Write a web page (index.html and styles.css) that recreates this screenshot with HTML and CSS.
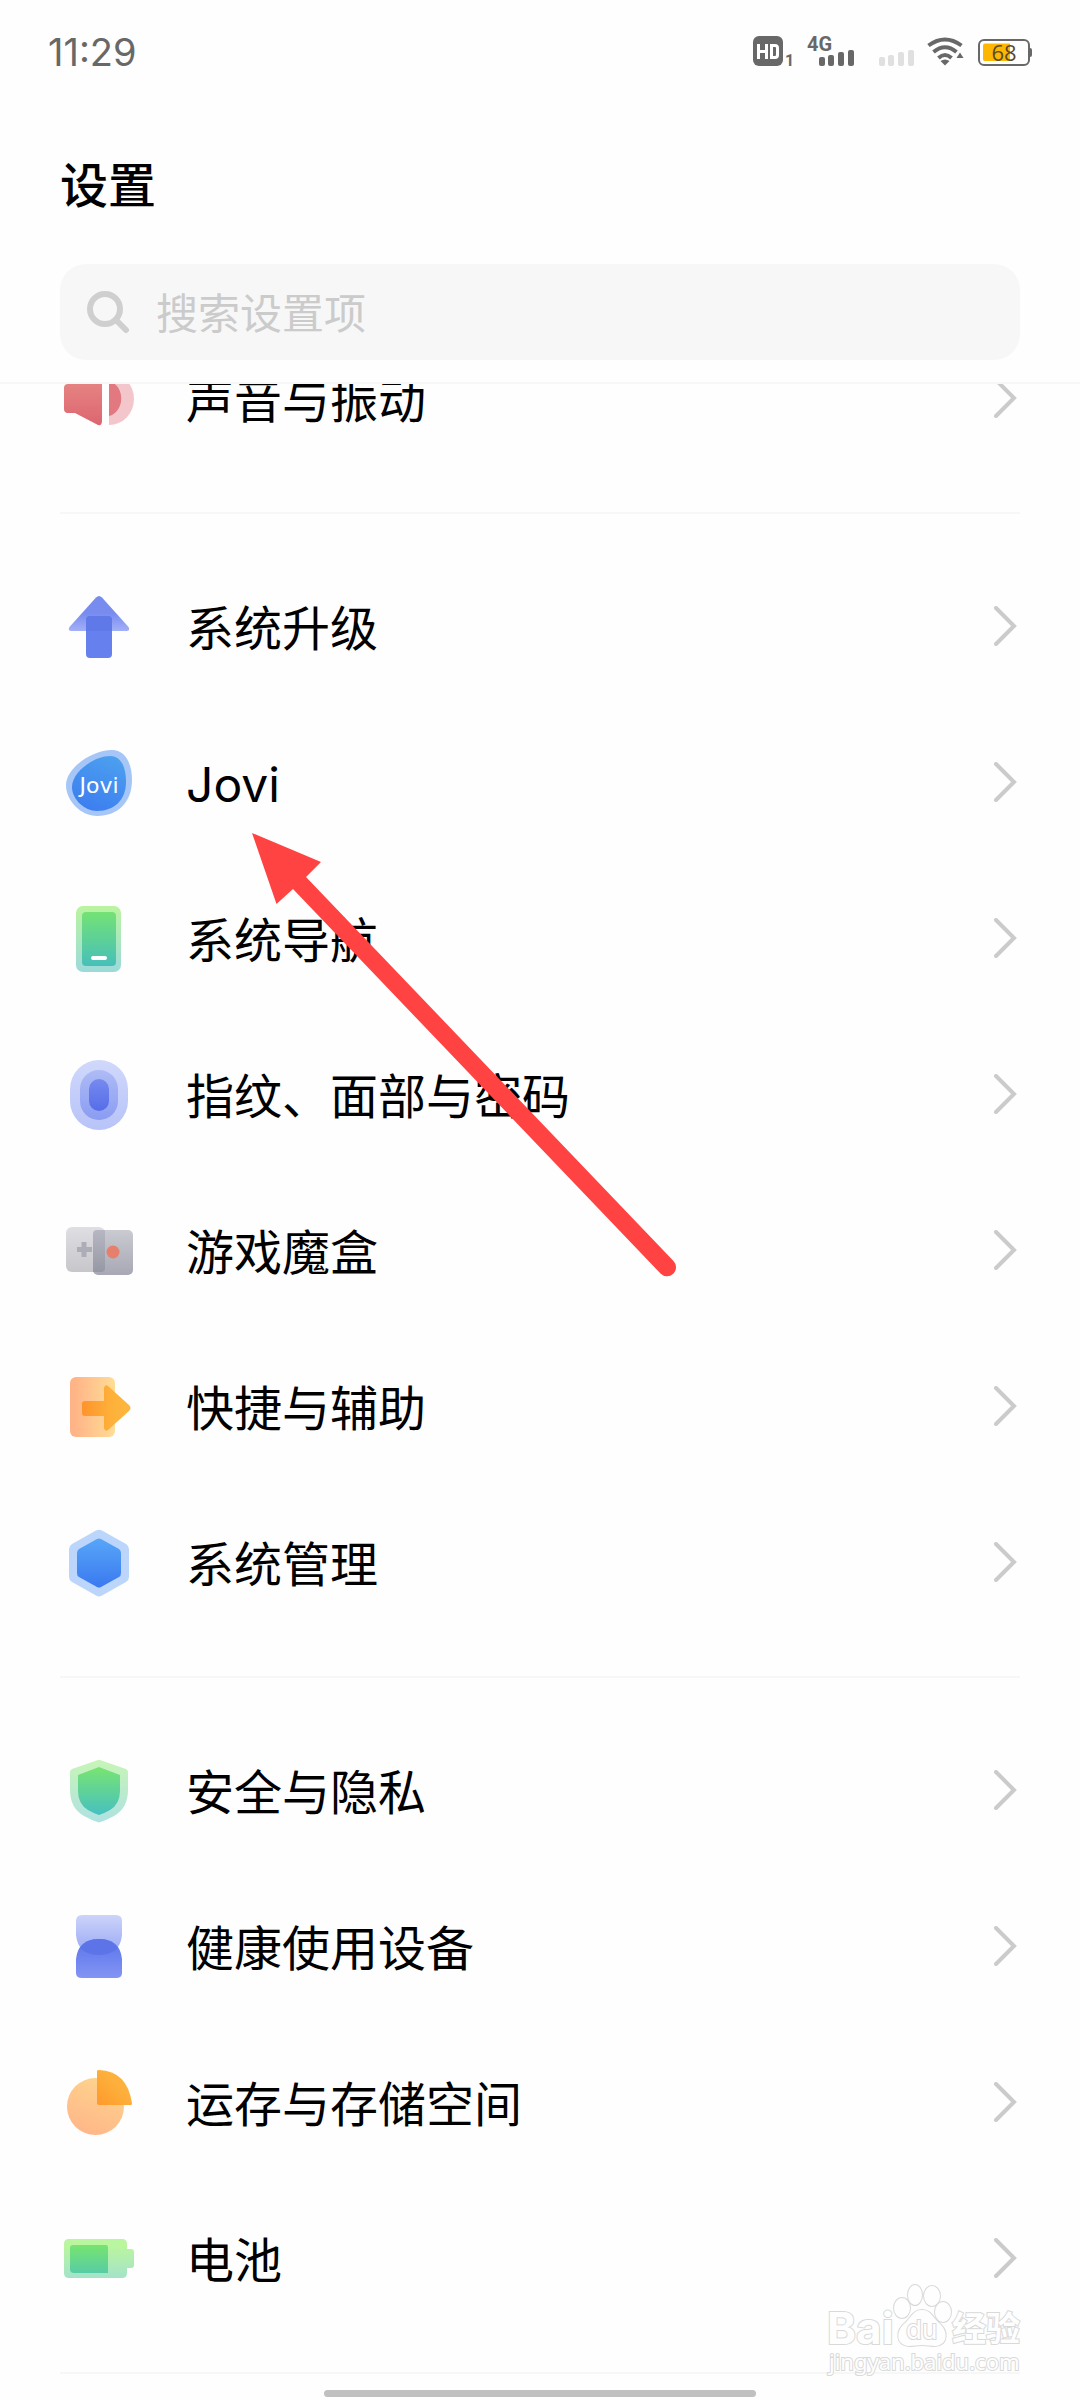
FILE: index.html
```html
<!DOCTYPE html>
<html lang="zh-CN">
<head>
<meta charset="utf-8">
<meta name="viewport" content="width=device-width, initial-scale=1">
<title>设置</title>
<link rel="stylesheet" href="styles.css">
</head>
<body>
<div class="screen">
  <header class="header">
    <div class="status">
      <time class="clock">11:29</time>
      <div class="status-icons">
        <svg class="status-svg" width="280" height="40" viewBox="752 32 280 40" role="img" aria-label="HD 4G 68%">
          <rect x="753" y="36" width="30" height="30" rx="6" fill="#686868"/>
          <path d="M758.5 44v15M766.500 44v15M758.5 51.500h8" stroke="#fff" stroke-width="3" fill="none"/>
          <path d="M771.500 45.500h3.500q2.500 0 2.500 2.500v7q0 2.500-2.500 2.500h-3.500z" stroke="#fff" stroke-width="3" fill="none"/>
          <text class="sim" x="785" y="66">1</text>
          <text class="net" x="807" y="51">4G</text>
          <g fill="#686868">
            <rect x="819" y="57" width="6" height="9" rx="2"/><rect x="828" y="55" width="6" height="11" rx="2"/><rect x="838" y="52" width="6" height="14" rx="2"/><rect x="848" y="50" width="6" height="16" rx="2"/>
          </g>
          <g fill="#e0e0e0">
            <rect x="879" y="57" width="6" height="9" rx="2"/><rect x="888" y="55" width="6" height="11" rx="2"/><rect x="898" y="52" width="6" height="14" rx="2"/><rect x="908" y="50" width="6" height="16" rx="2"/>
          </g>
          <g fill="none" stroke="#686868" stroke-width="4">
            <path d="M928.500 45.500Q945 33.500 961.500 45.500"/>
            <path d="M933.500 52Q945 42.500 956.500 52"/>
            <path d="M938.500 58Q945 52 951.500 58"/>
          </g>
          <path d="M945 65.500l-4.500-4.500q4.500-3 9 0z" fill="#686868"/>
          <path d="M956.500 58l3.500-5.500 3.500 5.500z" fill="#686868"/>
          <rect x="979" y="40" width="50" height="25" rx="5" fill="#fff" stroke="#686868" stroke-width="2"/>
          <path d="M985 43.500h25v17.500h-25q-2 0-2-2v-13.500q0-2 2-2z" fill="#fdb602"/>
          <path d="M1030 48q2 0 2 2v5q0 2-2 2z" fill="#686868"/>
          <text class="charge" x="1004" y="61" text-anchor="middle">68</text>
        </svg>
      </div>
    </div>
    <h1 class="title">设置</h1>
    <label class="search">
      <svg width="44" height="44" viewBox="0 0 44 44" aria-hidden="true"><circle cx="19" cy="19" r="15" fill="none" stroke="#cfcfcf" stroke-width="6"/><path d="M31 31l9 9" stroke="#cfcfcf" stroke-width="6" stroke-linecap="round"/></svg>
      <input class="search-input" type="search" placeholder="搜索设置项" aria-label="搜索设置项">
    </label>
  </header>

  <main class="list">
    <ul class="group group-scrolled">
      <li><a class="row" href="#sound">
        <svg class="icon" viewBox="0 0 78 78" aria-hidden="true">
          <defs><linearGradient id="red" x2="0" y2="1"><stop stop-color="#e88a86"/><stop offset="1" stop-color="#dc6670"/></linearGradient></defs>
          <path d="M8 25h7l23-11q4-1 4 3v45q0 5-4 4L15 54H8q-4 0-4-4V29q0-4 4-4z" fill="url(#red)"/>
          <path d="M49 14a25 26 0 0 1 0 52z" fill="#f2c6ca"/><path d="M49 22a16 18 0 0 1 0 35z" fill="#e27880"/>
        </svg><span class="label">声音与振动</span>
        <svg class="chevron" viewBox="0 0 26 40" aria-hidden="true"><path d="M2 2l18 18L2 38"/></svg></a></li>
    </ul>
    <ul class="group">
      <li><a class="row" href="#update">
        <svg class="icon" viewBox="0 0 78 78" aria-hidden="true">
          <defs><linearGradient id="up" x2="0" y2="1"><stop offset=".5" stop-color="#788cf0"/><stop offset="1" stop-color="#a3b0f7"/></linearGradient></defs>
          <path d="M36 10.500q3-3 6 0l26.500 29.500q2 4-2 4h-55q-4 0-2-4z" fill="url(#up)"/>
          <rect x="26" y="29" width="26" height="42" rx="4" fill="#6680ee"/>
          <path d="M30 29h18q4 0 4 4v11H26V33q0-4 4-4z" fill="#6079e8"/>
        </svg><span class="label">系统升级</span>
        <svg class="chevron" viewBox="0 0 26 40" aria-hidden="true"><path d="M2 2l18 18L2 38"/></svg></a></li>
      <li><a class="row" href="#jovi">
        <svg class="icon" viewBox="0 0 78 78" aria-hidden="true">
          <defs><linearGradient id="jo" x1=".7" y1="0" x2=".3" y2="1"><stop stop-color="#4c9fef"/><stop offset="1" stop-color="#3c7df0"/></linearGradient></defs>
          <path d="M52 7C65 7 72 20 72 37C72 59 58 73 37 73C21 73 6 58 6 42C6 25 32 7 52 7z" fill="#a5c6f7"/>
          <path d="M50 13C61 13 66 24 66 39C66 56 55 68 37 68C24 68 12 56 12 44C12 29 34 13 50 13z" fill="url(#jo)"/>
          <text class="jovi-mark" x="39" y="50" text-anchor="middle">Jovi</text>
        </svg><span class="label">Jovi</span>
        <svg class="chevron" viewBox="0 0 26 40" aria-hidden="true"><path d="M2 2l18 18L2 38"/></svg></a></li>
      <li><a class="row" href="#navigation">
        <svg class="icon" viewBox="0 0 78 78" aria-hidden="true">
          <defs><linearGradient id="na" x2="0" y2="1"><stop stop-color="#baf4a0"/><stop offset="1" stop-color="#9cdada"/></linearGradient><linearGradient id="nb" x2="0" y2="1"><stop stop-color="#74e275"/><stop offset="1" stop-color="#47bfba"/></linearGradient></defs>
          <rect x="16" y="7" width="45" height="66" rx="7" fill="url(#na)"/><rect x="22" y="13" width="34" height="54" rx="4" fill="url(#nb)"/><rect x="31" y="57" width="16" height="4" rx="2" fill="#fff"/>
        </svg><span class="label">系统导航</span>
        <svg class="chevron" viewBox="0 0 26 40" aria-hidden="true"><path d="M2 2l18 18L2 38"/></svg></a></li>
      <li><a class="row" href="#fingerprint">
        <svg class="icon" viewBox="0 0 78 78" aria-hidden="true">
          <defs><linearGradient id="fa" x2="0" y2="1"><stop stop-color="#d0d8fb"/><stop offset="1" stop-color="#b8c3f8"/></linearGradient><linearGradient id="fb" x2="0" y2="1"><stop stop-color="#aebbf6"/><stop offset="1" stop-color="#8a9cf2"/></linearGradient><linearGradient id="fc" x2="0" y2="1"><stop stop-color="#768aef"/><stop offset="1" stop-color="#566de8"/></linearGradient></defs>
          <rect x="10" y="5" width="58" height="70" rx="29" fill="url(#fa)"/><rect x="20" y="15" width="38" height="50" rx="19" fill="url(#fb)"/><rect x="29" y="24" width="20" height="32" rx="10" fill="url(#fc)"/>
        </svg><span class="label">指纹、面部与密码</span>
        <svg class="chevron" viewBox="0 0 26 40" aria-hidden="true"><path d="M2 2l18 18L2 38"/></svg></a></li>
      <li><a class="row" href="#games">
        <svg class="icon" viewBox="0 0 78 78" aria-hidden="true">
          <defs><linearGradient id="ga" x2="0" y2="1"><stop stop-color="#dfdfe3"/><stop offset="1" stop-color="#c6c6cb"/></linearGradient><linearGradient id="gb" x2="0" y2="1"><stop stop-color="#cacad1"/><stop offset="1" stop-color="#a7a8b4"/></linearGradient><linearGradient id="gc" x2="0" y2="1"><stop stop-color="#b6b7c2"/><stop offset="1" stop-color="#9698a5"/></linearGradient></defs>
          <rect x="6" y="16" width="39" height="45" rx="6" fill="url(#ga)"/><rect x="33" y="19" width="40" height="45" rx="5" fill="url(#gb)"/>
          <path d="M37 19h8v38q0 4-4 4h-8V23q0-4 4-4z" fill="url(#gc)"/>
          <path d="M24 31v15M17 38.500h15" stroke="#acadb6" stroke-width="5"/><circle cx="53" cy="41" r="6.500" fill="#e6806d"/>
        </svg><span class="label">游戏魔盒</span>
        <svg class="chevron" viewBox="0 0 26 40" aria-hidden="true"><path d="M2 2l18 18L2 38"/></svg></a></li>
      <li><a class="row" href="#shortcuts">
        <svg class="icon" viewBox="0 0 78 78" aria-hidden="true">
          <defs><linearGradient id="qa"><stop offset=".1" stop-color="#ffb487"/><stop offset="1" stop-color="#ffdd96"/></linearGradient><linearGradient id="qb"><stop stop-color="#ff932c"/><stop offset=".6" stop-color="#feb13a"/><stop offset="1" stop-color="#fdb73e"/></linearGradient></defs>
          <rect x="10" y="10" width="45" height="60" rx="6" fill="url(#qa)"/>
          <path d="M25 34h19V21q1-4 4-2l21 19q3 3 0 6L48 63q-3 2-4-2V49H25q-3 0-3-3v-9q0-3 3-3z" fill="url(#qb)"/>
        </svg><span class="label">快捷与辅助</span>
        <svg class="chevron" viewBox="0 0 26 40" aria-hidden="true"><path d="M2 2l18 18L2 38"/></svg></a></li>
      <li><a class="row" href="#system">
        <svg class="icon" viewBox="0 0 78 78" aria-hidden="true">
          <defs><linearGradient id="ma" x2="0" y2="1"><stop stop-color="#57a6f8"/><stop offset="1" stop-color="#3b79f0"/></linearGradient></defs>
          <path d="M36 7.500q3-1.500 6 0l24 13.500q3 2 3 5v28q0 3-3 5l-24 13.500q-3 2-6 0L12 59q-3-2-3-5V26q0-3 3-5z" fill="#bcd6fb"/>
          <path d="M37 16q2-1 4 0l18 10q2 1.500 2 4v20q0 3-2 4L41 64q-2 1-4 0L19 54q-2-1-2-4V30q0-2.500 2-4z" fill="url(#ma)"/>
        </svg><span class="label">系统管理</span>
        <svg class="chevron" viewBox="0 0 26 40" aria-hidden="true"><path d="M2 2l18 18L2 38"/></svg></a></li>
    </ul>
    <ul class="group">
      <li><a class="row" href="#security">
        <svg class="icon" viewBox="0 0 78 78" aria-hidden="true">
          <defs><linearGradient id="sa" x2="0" y2="1"><stop stop-color="#c8f5b6"/><stop offset="1" stop-color="#afe1e3"/></linearGradient><linearGradient id="sb" x2="0" y2="1"><stop stop-color="#79e471"/><stop offset="1" stop-color="#46c0c1"/></linearGradient></defs>
          <path d="M38 9q1-.5 2 0l26 9q2 1 2 3v18q0 18-14 26-7 4-15 6.500-8-2.500-15-6.500-14-8-14-26V21q0-2 2-3z" fill="url(#sa)"/>
          <path d="M39 16l21 8v16q0 13-10 19-6 3.500-11 5-5-1.500-11-5-10-6-10-19V24z" fill="url(#sb)"/>
        </svg><span class="label">安全与隐私</span>
        <svg class="chevron" viewBox="0 0 26 40" aria-hidden="true"><path d="M2 2l18 18L2 38"/></svg></a></li>
      <li><a class="row" href="#health">
        <svg class="icon" viewBox="0 0 78 78" aria-hidden="true">
          <defs><linearGradient id="ha" x2="0" y2="1"><stop stop-color="#ccd4fa"/><stop offset="1" stop-color="#97a6f4"/></linearGradient><linearGradient id="hb" x2="0" y2="1"><stop offset=".3" stop-color="#667eed"/><stop offset="1" stop-color="#8394f3"/></linearGradient></defs>
          <path d="M22 8h34q6 0 6 6v14q-2 20-23 20T16 28V14q0-6 6-6z" fill="url(#ha)"/>
          <path d="M16 66V52q2-20 23-20t23 20v14q0 5-6 5H22q-6 0-6-5z" fill="url(#hb)"/>
          <path d="M20 41q6-9 19-9t19 9q-7 7-19 7t-19-7z" fill="#5d74e8"/>
        </svg><span class="label">健康使用设备</span>
        <svg class="chevron" viewBox="0 0 26 40" aria-hidden="true"><path d="M2 2l18 18L2 38"/></svg></a></li>
      <li><a class="row" href="#storage">
        <svg class="icon" viewBox="0 0 78 78" aria-hidden="true">
          <defs><linearGradient id="ta" x1=".7" y1="0" x2=".3" y2="1"><stop stop-color="#fed48e"/><stop offset="1" stop-color="#ffb688"/></linearGradient><linearGradient id="tb" x1="1" y1="0" x2="0" y2="1"><stop offset=".4" stop-color="#fdb13c"/><stop offset="1" stop-color="#ff992c"/></linearGradient></defs>
          <circle cx="35.500" cy="43.500" r="28.500" fill="url(#ta)"/>
          <path d="M37 8q0-1 2-1 28 1 33 33 0 2-1 2H39q-2 0-2-2z" fill="url(#tb)"/>
        </svg><span class="label">运存与存储空间</span>
        <svg class="chevron" viewBox="0 0 26 40" aria-hidden="true"><path d="M2 2l18 18L2 38"/></svg></a></li>
      <li><a class="row" href="#battery">
        <svg class="icon" viewBox="0 0 78 78" aria-hidden="true">
          <defs><linearGradient id="ba" x2="0" y2="1"><stop offset=".2" stop-color="#baf5a0"/><stop offset="1" stop-color="#a3e3c9"/></linearGradient><linearGradient id="bb" x2="0" y2="1"><stop stop-color="#78e46e"/><stop offset="1" stop-color="#57cca6"/></linearGradient></defs>
          <path d="M9 20h53q5 0 5 5v5h4q3 0 3 3v13q0 3-3 3h-4v5q0 5-5 5H9q-5 0-5-5V25q0-5 5-5z" fill="url(#ba)"/>
          <path d="M13 26h33q2 0 2 2v26H14q-4 0-4-4V29q0-3 3-3z" fill="url(#bb)"/>
        </svg><span class="label">电池</span>
        <svg class="chevron" viewBox="0 0 26 40" aria-hidden="true"><path d="M2 2l18 18L2 38"/></svg></a></li>
    </ul>
  </main>

  <footer class="gesture"><div class="gesture-bar"></div></footer>

  <svg class="pointer" width="430" height="450" viewBox="250 830 430 450" aria-hidden="true">
    <path d="M252 833L321 862L306 877L673.500 1261A9 9 0 0 1 660.500 1273.500L293 889L276.500 904z" fill="#ff4242"/>
  </svg>

  <svg class="watermark" width="200" height="100" viewBox="824 2280 200 100" role="img" aria-label="Baidu 经验">
    <g class="mark">
      <text class="mark-brand" x="827" y="2344">Bai</text>
      <text class="mark-cn" x="952" y="2341">经验</text>
      <g>
        <ellipse cx="902" cy="2308" rx="8" ry="10"/><ellipse cx="915" cy="2295" rx="7" ry="10"/><ellipse cx="932" cy="2296" rx="8" ry="10"/><ellipse cx="943" cy="2312" rx="8" ry="10"/>
        <path d="M922 2310c9 0 11 8 17 13 9 7 10 22-4 23-5 0-8-1-13-1s-8 1-13 1c-14-1-13-16-4-23 6-5 8-13 17-13z"/>
      </g>
      <text class="mark-du" x="906" y="2339">du</text>
      <text class="mark-url" x="829" y="2370">jingyan.baidu.com</text>
    </g>
  </svg>
</div>
</body>
</html>
```
FILE: styles.css
```css
* {
  box-sizing: border-box;
}

body {
  margin: 0;
  background: #fefefe;
  color: #000;
  font-family: Inter, "Noto Sans CJK SC", sans-serif;
}

.screen {
  position: relative;
  min-height: 100vh;
  display: flex;
  flex-direction: column;
  overflow: hidden;
}

.header {
  display: flex;
  flex-direction: column;
  padding: 32px 60px 22px;
  border-bottom: 2px solid #f7f7f7;
}

.status {
  display: flex;
  justify-content: space-between;
  align-items: center;
  height: 40px;
  margin: 0 -12px;
}

.clock {
  color: #686868;
  font-size: 38px;
  line-height: 38px;
}

.status-icons {
  display: flex;
}

.sim,
.net {
  fill: #686868;
  font-family: Roboto, sans-serif;
  font-weight: 700;
}

.sim {
  font-size: 16px;
}

.net {
  font-size: 20px;
}

.charge {
  fill: #5a4a28;
  font-family: "Open Sans", sans-serif;
  font-size: 22px;
}

.title {
  margin: 70px 0 42px;
  font-family: "Noto Sans CJK SC", sans-serif;
  font-size: 48px;
  font-weight: 500;
  line-height: 80px;
}

.search {
  display: flex;
  align-items: center;
  gap: 26px;
  height: 96px;
  padding: 0 26px;
  border-radius: 26px;
  background: #f7f7f7;
}

.search-input {
  flex: 1;
  min-width: 0;
  height: 96px;
  padding: 0 0 4px;
  border: 0;
  outline: 0;
  background: none;
  color: #000;
  font-family: "Noto Sans CJK SC", sans-serif;
  font-size: 42px;
}

.search-input::placeholder {
  color: #cbcbcb;
}

.list {
  overflow: hidden;
}

.group {
  margin: 0 60px;
  padding: 34px 0 36px;
  border-bottom: 2px solid #f7f7f7;
  list-style: none;
}

/* The list is scrolled, so its first row slides under the header. */
.group-scrolled {
  margin-top: -64px;
  padding-top: 0;
}

.row {
  display: flex;
  align-items: center;
  height: 156px;
  color: inherit;
  text-decoration: none;
}

.icon {
  flex: none;
  width: 78px;
  height: 78px;
  margin-right: 48px;
}

.jovi-mark {
  fill: #fff;
  font-family: "DejaVu Sans", sans-serif;
  font-size: 22px;
}

.label {
  flex: 1;
  padding-top: 6px;
  font-size: 48px;
  line-height: 72px;
}

.chevron {
  flex: none;
  width: 26px;
  height: 40px;
  fill: none;
  stroke: #cbcbcb;
  stroke-width: 4;
  stroke-linecap: round;
}

.gesture {
  display: flex;
  justify-content: center;
  padding: 16px 0 3px;
}

.gesture-bar {
  width: 40%;
  height: 7px;
  border-radius: 4px;
  background: #c0c0c0;
}

.pointer {
  position: absolute;
  top: 830px;
  left: 250px;
}

.watermark {
  position: absolute;
  right: 56px;
  bottom: 20px;
}

.mark {
  fill: #fefefe;
  stroke: #d9d9d9;
  stroke-width: 2;
  paint-order: stroke;
}

.mark-brand {
  font-family: Inter, sans-serif;
  font-size: 44px;
  font-weight: 700;
}

.mark-cn {
  font-family: "Noto Sans CJK SC", sans-serif;
  font-size: 34px;
  font-weight: 700;
}

.mark-du {
  font-family: Inter, sans-serif;
  font-size: 26px;
}

.mark-url {
  font-family: "Noto Sans", sans-serif;
  font-size: 22px;
}
```
